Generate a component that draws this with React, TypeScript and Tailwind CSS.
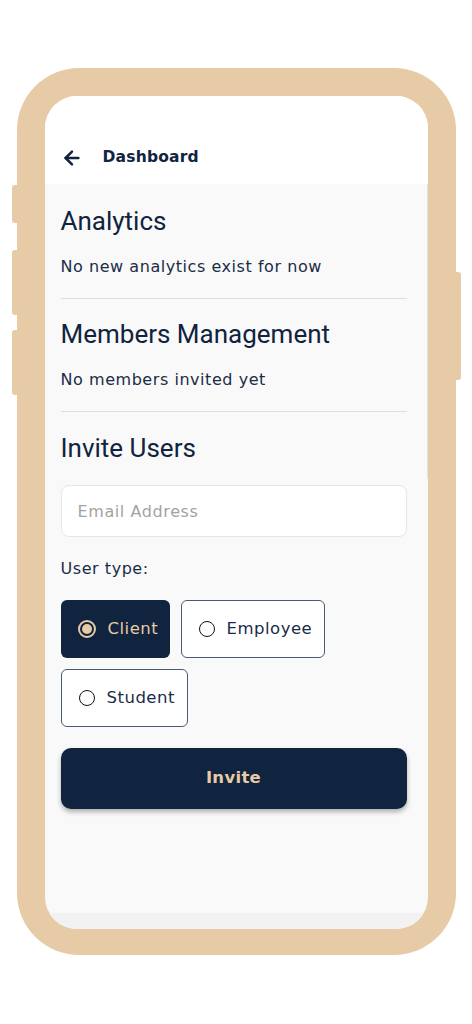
import { ArrowLeft } from 'lucide-react'

const NAVY = '#10233f'
const BODY_FONT = { fontFamily: '"DejaVu Sans", sans-serif' }
const HEAD_FONT = { fontFamily: 'Roboto, sans-serif' }

function Radio({ checked }: { checked?: boolean }) {
  return checked ? (
    <span className="flex h-[18px] w-[18px] items-center justify-center rounded-full border-2 border-[#e6cba4]">
      <span className="h-[10px] w-[10px] rounded-full bg-[#e6cba4]" />
    </span>
  ) : (
    <span className="h-[16px] w-[16px] rounded-full border-[1.5px] border-[#111]" />
  )
}

function TypeOption({ label, checked = false, width }: { label: string; checked?: boolean; width: string }) {
  return (
    <button
      className={`flex h-[58px] ${width} items-center gap-[12px] rounded-[6px] pl-[17px] text-[16.5px] tracking-[0.5px] ${
        checked ? 'bg-[#10233f] text-[#e6cba4]' : 'border border-[#4a5a72] bg-white text-[#1b2c47]'
      }`}
      style={BODY_FONT}
    >
      <Radio checked={checked} />
      <span>{label}</span>
    </button>
  )
}

export default function App() {
  return (
    <div className="flex min-h-[1024px] w-[472px] justify-center bg-white pt-[68px]">
      {/* phone frame */}
      <div className="relative h-[887px] w-[439px] rounded-[62px] bg-[#e7cba6] p-[28px] pb-[26px]">
        {/* side buttons */}
        <div className="absolute left-[-5px] top-[117px] h-[38px] w-[6px] rounded-l-[3px] bg-[#e7cba6]" />
        <div className="absolute left-[-5px] top-[182px] h-[65px] w-[6px] rounded-l-[3px] bg-[#e7cba6]" />
        <div className="absolute left-[-5px] top-[262px] h-[65px] w-[6px] rounded-l-[3px] bg-[#e7cba6]" />
        <div className="absolute right-[-5px] top-[204px] h-[108px] w-[6px] rounded-r-[3px] bg-[#e7cba6]" />

        {/* screen */}
        <div className="flex h-full flex-col overflow-hidden rounded-[32px] bg-[#f9f9f9]">
          {/* header */}
          <div className="flex h-[88px] shrink-0 items-end bg-white pb-[15px] pl-[16px]">
            <ArrowLeft size={22} strokeWidth={2.7} color={NAVY} />
            <span className="ml-[20px] text-[15.5px] font-semibold tracking-[0.2px] text-[#10233f]" style={BODY_FONT}>
              Dashboard
            </span>
          </div>

          {/* content */}
          <div className="relative flex flex-1 flex-col pl-[16px] pr-[21px] pt-[21px]">
            <div className="absolute right-0 top-0 h-[295px] w-px bg-[#e2e2e2]" />
            <h2 className="text-[26px] leading-[32px] text-[#10233f]" style={HEAD_FONT}>
              Analytics
            </h2>
            <p className="mt-[19px] text-[16px] leading-[22px] tracking-[0.55px] text-[#1b2c47]" style={BODY_FONT}>
              No new analytics exist for now
            </p>
            <div className="mt-[20px] h-px bg-[#dedede]" />

            <h2 className="mt-[19px] text-[26px] leading-[32px] text-[#10233f]" style={HEAD_FONT}>
              Members Management
            </h2>
            <p className="mt-[19px] text-[16px] leading-[22px] tracking-[0.55px] text-[#1b2c47]" style={BODY_FONT}>
              No members invited yet
            </p>
            <div className="mt-[20px] h-px bg-[#dedede]" />

            <h2 className="mt-[20px] text-[26px] leading-[32px] text-[#10233f]" style={HEAD_FONT}>
              Invite Users
            </h2>

            <input
              placeholder="Email Address"
              className="mt-[21px] h-[52px] rounded-[8px] border border-[#e6e6e6] bg-white px-[16px] text-[16px] tracking-[0.6px] outline-none placeholder:text-[#a3a3a3]"
              style={BODY_FONT}
            />

            <p className="mt-[21px] text-[16px] leading-[22px] tracking-[0.55px] text-[#1b2c47]" style={BODY_FONT}>
              User type:
            </p>

            <div className="mt-[20px] flex flex-wrap gap-x-[11px] gap-y-[11px]">
              <TypeOption label="Client" checked width="w-[109px]" />
              <TypeOption label="Employee" width="w-[144px]" />
              <TypeOption label="Student" width="w-[127px]" />
            </div>

            <button
              className="mt-[21px] h-[61px] rounded-[10px] bg-[#10233f] text-[16.5px] font-semibold tracking-[0.3px] text-[#e6cba4] shadow-[0_3px_5px_rgba(0,0,0,0.3)]"
              style={BODY_FONT}
            >
              Invite
            </button>
          </div>

          <div className="h-[16px] shrink-0 bg-[#f2f2f2]" />
        </div>
      </div>
    </div>
  )
}
